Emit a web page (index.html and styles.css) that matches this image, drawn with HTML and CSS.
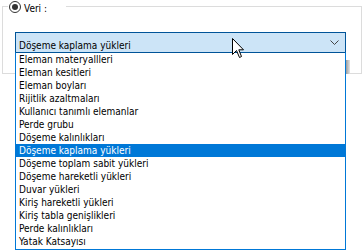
FILE: index.html
```html
<!DOCTYPE html>
<html lang="tr">
	<head>
		<meta charset="utf-8">
		<title>Veri</title>
		<link rel="stylesheet" href="styles.css">
	</head>
	<body>
		<div class="group">
			<div class="group-title">
				<span class="radio checked"></span>
				<span class="radio-label">Veri :</span>
			</div>

			<div class="combo">
				<span class="combo-value">Döşeme kaplama yükleri</span>
				<svg class="combo-arrow" width="9" height="5" viewBox="0 0 9 5">
					<polyline points="0.5,0.5 4.5,4.5 8.5,0.5" fill="none" stroke="#444" stroke-width="1"/>
				</svg>

				<ul class="dropdown">
					<li>Eleman materyallleri</li>
					<li>Eleman kesitleri</li>
					<li>Eleman boyları</li>
					<li>Rijitlik azaltmaları</li>
					<li>Kullanıcı tanımlı elemanlar</li>
					<li>Perde grubu</li>
					<li>Döşeme kalınlıkları</li>
					<li class="selected">Döşeme kaplama yükleri</li>
					<li>Döşeme toplam sabit yükleri</li>
					<li>Döşeme hareketli yükleri</li>
					<li>Duvar yükleri</li>
					<li>Kiriş hareketli yükleri</li>
					<li>Kiriş tabla genişlikleri</li>
					<li>Perde kalınlıkları</li>
					<li>Yatak Katsayısı</li>
				</ul>

				<!-- mouse pointer hovering the combo -->
				<svg class="cursor" width="13" height="20" viewBox="0 0 13 20">
					<path d="M0.5,0.5 L0.5,16.5 L4.5,12.5 L7.5,19.5 L9.5,18.5 L6.8,11.8 L11.5,11.8 Z" fill="#fff" stroke="#000" stroke-width="1"/>
				</svg>
			</div>
		</div>
	</body>
</html>
```

FILE: styles.css
```css
*, *:after, *:before { box-sizing: border-box; }

html, body {
	height: 250px;
}

body {
	margin: 0;
	overflow: hidden;
	background: #fff;
	font-family: 'DejaVu Sans Condensed', 'DejaVu Sans', sans-serif;
	font-size: 10px;
	color: #000;
}

/*************************************
Group box with radio caption
**************************************/

.group {
	position: relative;
	width: 360px;
	margin: 6px 0 0 2px;
	border: 1px solid #dcdcdc;
}

.group::after {
	/* edge of the control hidden behind the popup */
	content: '';
	position: absolute;
	left: 343px;
	top: 53px;
	width: 4px;
	height: 14px;
	background: linear-gradient(to right, #9a9a9a, #e6e6e6);
}

.group-title {
	display: flex;
	align-items: flex-start;
	width: 58px;
	height: 13px;
	margin: -7px 0 0 5px;
	background: #fff;
}

.radio {
	position: relative;
	width: 12px;
	height: 12px;
	margin: 1px 0 0 1px;
	border: 1px solid #333;
	border-radius: 50%;
	background: #fff;
}

.radio.checked::after {
	content: '';
	position: absolute;
	left: 2px;
	top: 2px;
	width: 6px;
	height: 6px;
	border-radius: 50%;
	background: #333;
}

.radio-label {
	margin-left: 3px;
	padding-top: 2px;
	line-height: 13px;
}

/*************************************
Combo box and its open list
**************************************/

.combo {
	position: relative;
	display: flex;
	align-items: flex-start;
	justify-content: space-between;
	width: 331px;
	height: 21px;
	margin: 19px 0 20px 12px;
	padding: 6px 3px 0 3px;
	border: 1px solid #005499;
	background: #cce4f7;
}

.combo-value {
	line-height: 13px;
}

.combo-arrow {
	margin: 1px 3px 0 0;
}

.dropdown {
	position: absolute;
	left: -1px;
	top: 19px;
	width: 331px;
	height: 198px;
	margin: 0;
	padding: 0;
	list-style: none;
	background: #fff;
	border: 1px solid #0078d7;
	border-top-color: #005499;
	z-index: 2;
}

.dropdown li {
	height: 13px;
	padding-left: 3px;
	line-height: 13px;
	white-space: nowrap;
}

.dropdown li.selected {
	background: #0078d7;
	color: #fff;
}

.cursor {
	position: absolute;
	left: 216px;
	top: 5px;
	z-index: 3;
}
```
